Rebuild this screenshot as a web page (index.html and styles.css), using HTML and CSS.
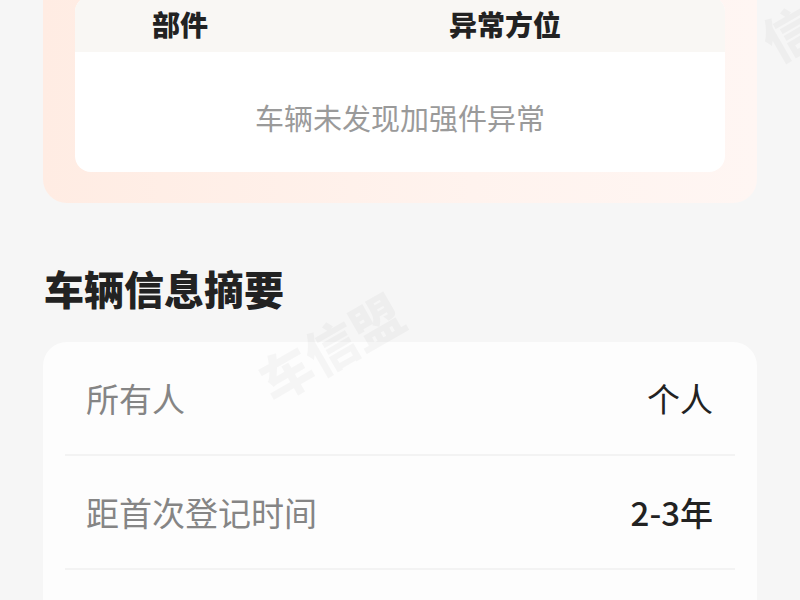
FILE: index.html
```html
<!DOCTYPE html>
<html>
<head>
    <meta charset="utf-8">
    <title>车辆报告</title>
    <link rel="stylesheet" href="styles.css">
</head>
<body>
    <div class="page">
        <!-- 加强件检测结果 -->
        <div class="report-card">
            <div class="check-table">
                <div class="table-head">
                    <div class="col-part">部件</div>
                    <div class="col-pos">异常方位</div>
                </div>
                <div class="table-empty">车辆未发现加强件异常</div>
            </div>
        </div>

        <h2 class="section-title">车辆信息摘要</h2>

        <div class="info-card">
            <div class="info-row">
                <span class="info-label">所有人</span>
                <span class="info-value">个人</span>
            </div>
            <div class="info-row">
                <span class="info-label">距首次登记时间</span>
                <span class="info-value num">2-3年</span>
            </div>
        </div>

        <!-- 水印 -->
        <div class="watermark wm-center">车信盟</div>
        <div class="watermark wm-corner">信</div>
    </div>
</body>
</html>
```

FILE: styles.css
```css
body {
    margin: 0;
    background: #f6f6f6;
    font-family: "Noto Sans CJK SC", "Noto Sans", sans-serif;
    color: #222;
    overflow: hidden;
}
.page {
    position: relative;
    height: 600px;
    overflow: hidden;
}
.report-card {
    margin: -36px 43px 0;
    padding: 32px 32px 31px;
    border-radius: 24px;
    background: linear-gradient(to right, #ffece3, #fff3ee 60%, #fff6f3);
}
.check-table {
    background: #fff;
    border-radius: 16px;
    overflow: hidden;
}
.table-head {
    display: flex;
    height: 56px;
    align-items: center;
    background: #f9f7f4;
    font-size: 28px;
    font-weight: 900;
}
.col-part {
    width: 210px;
    text-align: center;
}
.col-pos {
    flex: 1;
    text-align: center;
}
.table-empty {
    padding: 45px 0 35px;
    line-height: 40px;
    text-align: center;
    font-size: 29px;
    color: #9a9a9a;
}
.section-title {
    margin: 57px 0 26px 44px;
    font-size: 40px;
    line-height: 56px;
    font-weight: 900;
    color: #222;
}
.info-card {
    margin: 0 43px;
    padding: 0 22px 60px;
    background: #fdfdfd;
    border-radius: 24px;
}
.info-row {
    display: flex;
    justify-content: space-between;
    align-items: center;
    height: 112px;
    padding: 0 22px 0 21px;
    border-bottom: 2px solid #f3f3f3;
    font-size: 33px;
}
.info-label {
    color: #858585;
}
.info-value {
    color: #222;
}
.info-value.num {
    font-weight: 500;
}
.watermark {
    position: absolute;
    font-size: 52px;
    font-weight: 900;
    color: rgba(0, 0, 0, 0.03);
    transform: rotate(-30deg);
    pointer-events: none;
    white-space: nowrap;
}
.wm-center {
    left: 252px;
    top: 308px;
}
.wm-corner {
    left: 762px;
    top: -6px;
}
```
